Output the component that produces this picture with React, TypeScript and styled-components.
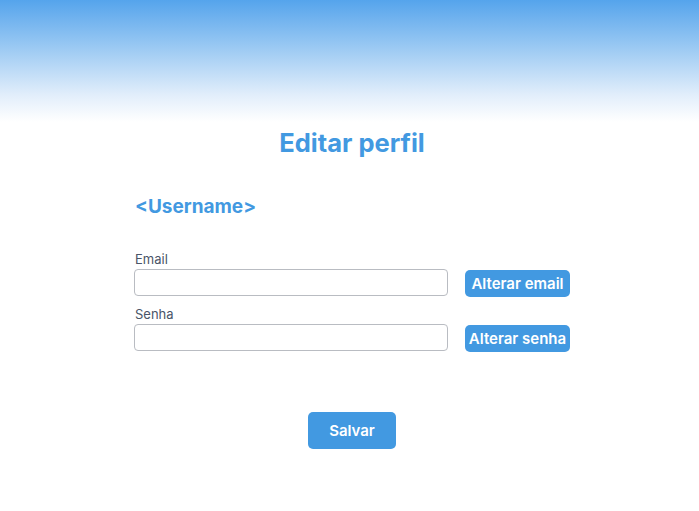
import React from "react";
import styled, { createGlobalStyle } from "styled-components";

const Global = createGlobalStyle`
  html, body { margin: 0; padding: 0; background: #fff; }
  body { font-family: Inter, "Noto Sans", sans-serif; }
  * { box-sizing: border-box; }
`;

const Page = styled.div`
  width: 699px;
  min-height: 511px;
  display: flex;
  flex-direction: column;
`;

const Header = styled.div`
  height: 122px;
  background: linear-gradient(to bottom, #55a4ec 0%, #a6cff4 45%, #e2eefb 78%, #ffffff 100%);
`;

const Title = styled.h1`
  margin: 5px 0 0 0;
  text-align: center;
  font-size: 25.5px;
  font-weight: 700;
  color: #4299e1;
  line-height: 32px;
  padding-left: 5px;
`;

const Form = styled.div`
  width: 436px;
  margin: 35px 0 0 134px;
  display: flex;
  flex-direction: column;
`;

const Username = styled.h2`
  margin: 0 0 0 1px;
  font-size: 19px;
  font-weight: 700;
  color: #4299e1;
  line-height: 26px;
`;

const Fields = styled.div`
  margin-top: 31px;
  display: flex;
  flex-direction: column;
  gap: 9px;
`;

const Field = styled.div`
  display: flex;
  flex-direction: column;
`;

const Label = styled.label`
  font-size: 13px;
  color: #4a5568;
  line-height: 17px;
  margin-left: 1px;
`;

const Row = styled.div`
  display: flex;
  align-items: center;
  gap: 17px;
`;

const Input = styled.input`
  width: 314px;
  height: 27px;
  border: 1px solid #b9bcc2;
  border-radius: 4px;
  background: #fff;
  outline: none;
`;

const SmallButton = styled.button`
  width: 105px;
  height: 27px;
  margin-top: 2px;
  border: none;
  border-radius: 5px;
  background: #4299e1;
  color: #fff;
  font-family: Inter, sans-serif;
  font-size: 15px;
  font-weight: 600;
  padding: 0;
`;

const Footer = styled.div`
  margin-top: 60px;
  display: flex;
  justify-content: center;
  padding-left: 5px;
`;

const SaveButton = styled.button`
  width: 88px;
  height: 37px;
  border: none;
  border-radius: 5px;
  background: #4299e1;
  color: #fff;
  font-family: Inter, sans-serif;
  font-size: 15px;
  font-weight: 600;
`;

export default function App() {
  return (
    <Page>
      <Global />
      <Header />
      <Title>Editar perfil</Title>
      <Form>
        <Username>&lt;Username&gt;</Username>
        <Fields>
          <Field>
            <Label>Email</Label>
            <Row>
              <Input type="email" />
              <SmallButton>Alterar email</SmallButton>
            </Row>
          </Field>
          <Field>
            <Label>Senha</Label>
            <Row>
              <Input type="password" />
              <SmallButton>Alterar senha</SmallButton>
            </Row>
          </Field>
        </Fields>
      </Form>
      <Footer>
        <SaveButton>Salvar</SaveButton>
      </Footer>
    </Page>
  );
}
